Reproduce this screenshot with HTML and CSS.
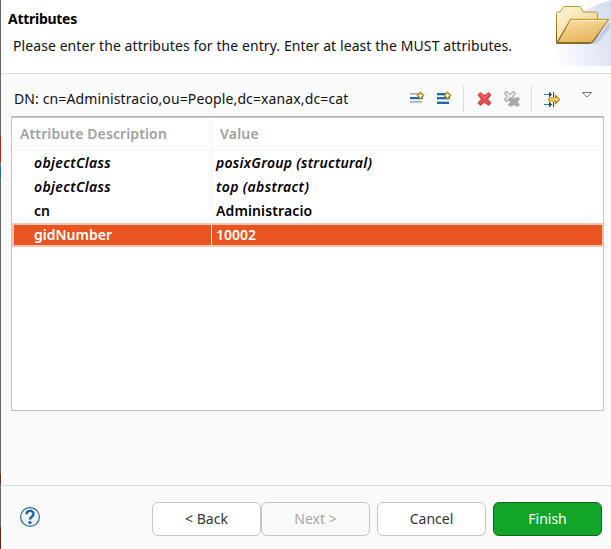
FILE: index.html
```html
<!DOCTYPE html>
<html lang="en">
<head>
<meta charset="utf-8">
<title>New Entry</title>
<link rel="stylesheet" href="styles.css">
</head>
<body>
<main class="dialog">
  <header class="banner">
    <div class="heading">
      <h1><span class="t-title">Attributes</span></h1>
      <p><span class="t-message">Please enter the attributes for the entry. Enter at least the MUST attributes.</span></p>
    </div>
    <svg class="folder" width="71" height="66" viewBox="0 0 71 66">
      <defs>
        <linearGradient id="bg" x1="0" y1=".6" x2="1" y2=".3"><stop offset=".1" stop-color="#fff"/><stop offset="1" stop-color="#d6def2"/></linearGradient>
        <linearGradient id="back" x1="0" y1="0" x2="1" y2="1"><stop stop-color="#fff6d8"/><stop offset="1" stop-color="#eccb82"/></linearGradient>
        <linearGradient id="front" x1="0" y1="0" x2=".5" y2="1"><stop stop-color="#f7e2a8"/><stop offset="1" stop-color="#e6b45c"/></linearGradient>
        <linearGradient id="edge" x1="0" y1="0" x2="0" y2="1"><stop stop-color="#c5a13c"/><stop offset="1" stop-color="#73540f"/></linearGradient>
      </defs>
      <path d="M0 66C14 35 29 12 71 0V66Z" fill="url(#bg)"/>
      <path d="M19 43H52L70 22V28L57 44Z" fill="#a9b4d3" opacity=".5"/>
      <path d="M16.500 42V13.500Q16.500 12 18 12H20L23.500 7Q24 6.500 25 6.500H39Q40 6.500 40.700 7.500L43.500 12H56Q57.500 12 57.500 13.500V36L50 43H18Z" fill="url(#back)" stroke="url(#edge)"/>
      <path d="M30.500 19.500H68.500L53 41.500Q52 43 50 43H17Z" fill="url(#front)" stroke="url(#edge)" stroke-width="1.300"/>
      <path d="M31.500 20.700H66" stroke="#fff2c6" fill="none"/>
    </svg>
  </header>
  <section class="content">
    <div class="toolbar">
      <div class="dn"><span class="t-dn">DN: cn=Administracio,ou=People,dc=xanax,dc=cat</span></div>
      <svg class="tools" width="210" height="30" viewBox="400 84 210 30" shape-rendering="crispEdges">
        <path d="M410 93h10v1h-10zM410 101h12v1h-12z" fill="#aaa"/><path d="M410 94h10v1h-10zM410 102h12v1h-12z" fill="#ccc"/>
        <path d="M410 97h13v2h-13z" fill="#2169a8"/><path d="M410 99h12v1h-12z" fill="#c5e0f5"/><path d="M410 103h12v1h-12z" fill="#eee"/>
        <path d="M437 93h10v2h-10zM437 97h13v2h-13zM437 102h12v2h-12z" fill="#2169a8"/><path d="M437 95h9v1h-9zM437 99h12v1h-12zM437 101h12v1h-12z" fill="#a9cbe7"/>
        <g id="spark" shape-rendering="auto"><path d="M420.500 92.500L422 94L423.500 95.500L422 97L420.500 98.500L419 97L417.500 95.500L419 94Z" fill="#fff1b5" stroke="#b88918" stroke-width="1.600"/><path d="M420.500 93.500V97.500M418.500 95.500H422.500" stroke="#fffbe8"/></g>
        <use href="#spark" x="27"/>
        <path d="M463 86h1v26h-1zM531 86h1v26h-1z" fill="#dadada"/>
        <g shape-rendering="auto">
          <path d="M480.500 93L484.500 96.200L488.500 93L490.500 95L487.200 99L490.500 103L488.500 105L484.500 101.800L480.500 105L478.500 103L481.800 99L478.500 95Z" fill="#ea5050" stroke="#d84450" stroke-width="1.600" stroke-linejoin="round"/>
          <path d="M480.500 94L484.500 98L488.500 94" fill="none" stroke="#f58474"/>
          <path d="M506.500 91.500L510 94.500L513.500 91.500L515.500 93.500L512.500 96.500L515 99L512.500 101.500L510 99L506.500 101.500L504.500 99.500L507.500 96.500L504.500 93.500Z" fill="#f7f7f7" stroke="#aaa" stroke-width="1.200"/>
          <path d="M510.500 97.500L514 100L517.500 97.500L519 99.500L516.500 102L519 104.500L517.500 106L514 104L510.500 106L508.500 104.500L511.500 102L508.500 99.500Z" fill="#aaa" stroke="#aaa" stroke-width="1.500" stroke-linejoin="round"/>
        </g>
        <path d="M544 94h6v1h-6zM544 104h6v1h-6z" fill="#34789f"/>
        <path d="M549 92h1v1h1v1h1v1h-1v1h-1v1h-1zM549 102h1v1h1v1h1v1h-1v1h-1v1h-1zM553 92h1v5h-1zM553 102h1v5h-1z" fill="#394252"/>
        <path d="M549 98H555.500V95.500L559.500 99.500L555.500 103.500V101H549Z" fill="#ffe59b" stroke="#b67c00" stroke-width="1.200" shape-rendering="auto"/>
        <path d="M582.500 92.500H591.500L587 97Z" fill="#fff" stroke="#77736f" shape-rendering="auto"/>
      </svg>
    </div>
    <div class="table">
      <div class="row head"><div><span class="t-h1">Attribute Description</span></div><div><span class="t-h2">Value</span></div></div>
      <div class="row must"><div><span class="t-oc">objectClass</span></div><div><span class="t-posix">posixGroup (structural)</span></div></div>
      <div class="row must"><div><span class="t-oc">objectClass</span></div><div><span class="t-top">top (abstract)</span></div></div>
      <div class="row"><div><span>cn</span></div><div><span class="t-admin">Administracio</span></div></div>
      <div class="row selected"><div><span>gidNumber</span></div><div><span>10002</span></div></div>
    </div>
  </section>
  <footer class="actions">
    <svg class="help" width="22" height="22" viewBox="0 0 22 22"><defs><linearGradient id="hg" x1="0" y1="0" x2="0" y2="1"><stop stop-color="#fff"/><stop offset="1" stop-color="#dceaf2"/></linearGradient></defs><circle cx="11" cy="11" r="9.400" fill="url(#hg)" stroke="#2b6593" stroke-width="1.200"/><path d="M7.500 8.200C7.500 3.800 14.500 3.800 14.500 8C14.500 10.800 11 10.500 11 13.500" fill="none" stroke="#2763a0" stroke-width="2.500"/><circle cx="11" cy="16.500" r="1.600" fill="#2763a0"/></svg>
    <div class="buttons">
      <button>&lt; Back</button><button class="next" disabled>Next &gt;</button><button class="cancel">Cancel</button><button class="finish">Finish</button>
    </div>
  </footer>
</main>
</body>
</html>
```
FILE: styles.css
```css
* { box-sizing: border-box; }
body { margin: 0; background: #fafafa; color: #111; font: 14px/20px "Noto Sans", "Open Sans", sans-serif; }
span { white-space: nowrap; }
.dialog { width: 611px; height: 549px; display: flex; flex-direction: column; overflow: hidden; border-left: 1px solid;
  border-image: linear-gradient(#656565 0 137px, #a42c18 137px 162px, #777 162px 167px, #27649b 167px 178px, #656565 178px 473px, #682e16 473px 483px, #656565 483px 526px, #6b240e 526px) 1; }
.banner { height: 74px; flex: none; display: flex; justify-content: space-between; background: #fff; border-bottom: 1px solid #dcdcdc; }
.heading { padding: 9px 0 0 7px; }
h1, p { margin: 0; font-size: 14px; line-height: 20px; }
h1 { color: #000; }
p { padding: 7px 0 0 5px; }
.folder { display: block; flex: none; }
.content { flex: 1; padding: 10px 7px 0 10px; }
.toolbar { height: 32px; display: flex; justify-content: space-between; margin-right: -6px; }
.dn { padding: 5px 0 0 3px; }
.tools { flex: none; }
.table { height: 295px; border: 1px solid #c3c3c3; border-top-color: #b5b5b5; background: #fff; color: #000; font-weight: 600; box-shadow: inset 0 1px #c9c9c9; }
.row { display: grid; grid-template-columns: 200px 1fr; height: 24px; line-height: 23px; }
.row > div { padding-left: 22px; border-right: 1px solid #f5f5f5; }
.row > div + div { padding-left: 4px; border: 0; }
.head { height: 34px; line-height: 33px; color: #a1a1a1; border-bottom: 1px solid #f5f5f5; }
.head > div { padding-left: 8px; }
.head > div + div { padding-left: 8px; }
.must { font-style: italic; }
.selected { color: #fff; background: #e95420; border: 2px solid #f7c5b3; border-right-width: 1px; grid-template-columns: 198px 1fr; line-height: 19px; }
.selected > div { padding-left: 20px; }
.actions { height: 64px; flex: none; display: flex; justify-content: space-between; border-top: 1px solid #dcdcdc; padding: 16px 9px 0 18px; }
.help { margin-top: 4px; }
.buttons { display: flex; }
button { width: 109px; height: 34px; padding: 0; border: 1px solid #c5c5c5; border-radius: 6px; background: #fff; color: #333; font: inherit; }
.next { background: #fafafa; color: #a5a5a5; }
.cancel, .finish { margin-left: 7px; }
.finish { background: #12a529; border-color: #12691e; color: #fff; }
.t-title { letter-spacing: -.28px; }
.t-message { letter-spacing: .08px; }
.t-dn { letter-spacing: .12px; }
.t-h1, .t-admin { letter-spacing: .12px; }
.t-h2 { letter-spacing: .2px; }
.t-oc, .t-top { letter-spacing: .36px; }
.t-posix { letter-spacing: .27px; }
```
